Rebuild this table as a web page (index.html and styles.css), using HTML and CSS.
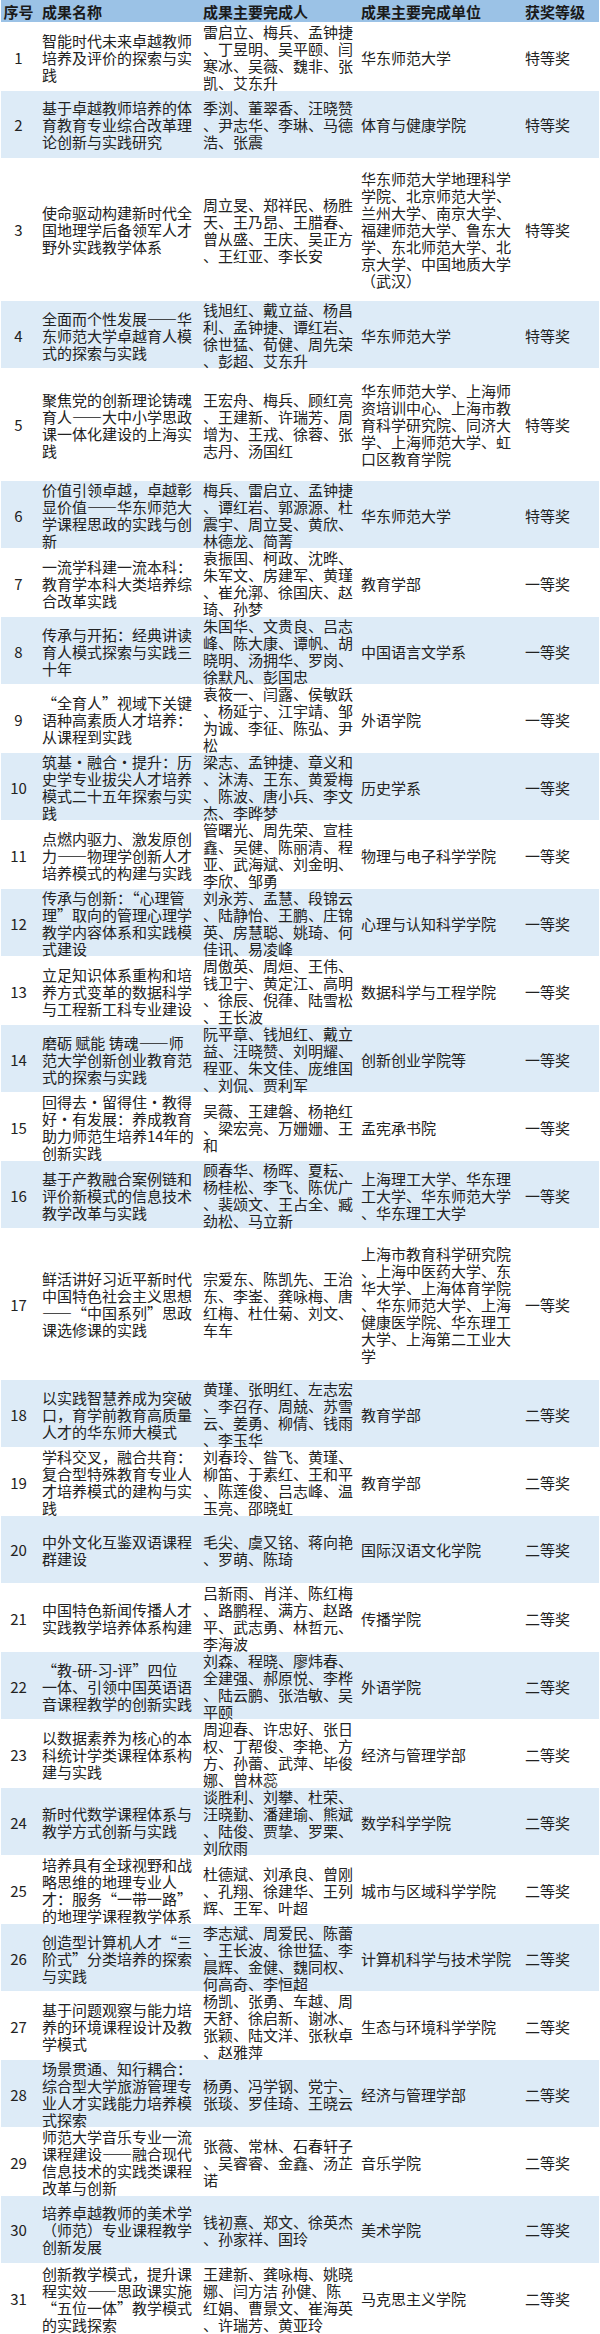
FILE: index.html
```html
<!DOCTYPE html>
<html lang="zh-CN">
<head>
<meta charset="utf-8">
<title>教学成果奖</title>
<link rel="stylesheet" href="styles.css">
</head>
<body>
<div class="table">
  <div class="row head">
    <div class="c seq">序号</div>
    <div class="c title">成果名称</div>
    <div class="c names">成果主要完成人</div>
    <div class="c unit">成果主要完成单位</div>
    <div class="c award">获奖等级</div>
  </div>

  <div class="row">
    <div class="c seq">1</div>
    <div class="c title">智能时代未来卓越教师<br>培养及评价的探索与实<br>践</div>
    <div class="c names">雷启立、梅兵、孟钟捷<br>、丁昱明、吴平颐、闫<br>寒冰、吴薇、魏非、张<br>凯、艾东升</div>
    <div class="c unit">华东师范大学</div>
    <div class="c award">特等奖</div>
  </div>

  <div class="row alt">
    <div class="c seq">2</div>
    <div class="c title">基于卓越教师培养的体<br>育教育专业综合改革理<br>论创新与实践研究</div>
    <div class="c names">季浏、董翠香、汪晓赞<br>、尹志华、李琳、马德<br>浩、张震</div>
    <div class="c unit">体育与健康学院</div>
    <div class="c award">特等奖</div>
  </div>

  <div class="row h142">
    <div class="c seq">3</div>
    <div class="c title">使命驱动构建新时代全<br>国地理学后备领军人才<br>野外实践教学体系</div>
    <div class="c names">周立旻、郑祥民、杨胜<br>天、王乃昂、王腊春、<br>曾从盛、王庆、吴正方<br>、王红亚、李长安</div>
    <div class="c unit">华东师范大学地理科学<br>学院、北京师范大学、<br>兰州大学、南京大学、<br>福建师范大学、鲁东大<br>学、东北师范大学、北<br>京大学、中国地质大学<br>（武汉）</div>
    <div class="c award">特等奖</div>
  </div>

  <div class="row alt">
    <div class="c seq">4</div>
    <div class="c title">全面而个性发展——华<br>东师范大学卓越育人模<br>式的探索与实践</div>
    <div class="c names">钱旭红、戴立益、杨昌<br>利、孟钟捷、谭红岩、<br>徐世猛、荀健、周先荣<br>、彭超、艾东升</div>
    <div class="c unit">华东师范大学</div>
    <div class="c award">特等奖</div>
  </div>

  <div class="row h112">
    <div class="c seq">5</div>
    <div class="c title">聚焦党的创新理论铸魂<br>育人——大中小学思政<br>课一体化建设的上海实<br>践</div>
    <div class="c names">王宏舟、梅兵、顾红亮<br>、王建新、许瑞芳、周<br>增为、王戎、徐蓉、张<br>志丹、汤国红</div>
    <div class="c unit">华东师范大学、上海师<br>资培训中心、上海市教<br>育科学研究院、同济大<br>学、上海师范大学、虹<br>口区教育学院</div>
    <div class="c award">特等奖</div>
  </div>

  <div class="row alt">
    <div class="c seq">6</div>
    <div class="c title">价值引领卓越，卓越彰<br>显价值——华东师范大<br>学课程思政的实践与创<br>新</div>
    <div class="c names">梅兵、雷启立、孟钟捷<br>、谭红岩、郭源源、杜<br>震宇、周立旻、黄欣、<br>林德龙、简菁</div>
    <div class="c unit">华东师范大学</div>
    <div class="c award">特等奖</div>
  </div>

  <div class="row">
    <div class="c seq">7</div>
    <div class="c title">一流学科建一流本科：<br>教育学本科大类培养综<br>合改革实践</div>
    <div class="c names">袁振国、柯政、沈晔、<br>朱军文、房建军、黄瑾<br>、崔允漷、徐国庆、赵<br>琦、孙梦</div>
    <div class="c unit">教育学部</div>
    <div class="c award">一等奖</div>
  </div>

  <div class="row alt">
    <div class="c seq">8</div>
    <div class="c title">传承与开拓：经典讲读<br>育人模式探索与实践三<br>十年</div>
    <div class="c names">朱国华、文贵良、吕志<br>峰、陈大康、谭帆、胡<br>晓明、汤拥华、罗岗、<br>徐默凡、彭国忠</div>
    <div class="c unit">中国语言文学系</div>
    <div class="c award">一等奖</div>
  </div>

  <div class="row">
    <div class="c seq">9</div>
    <div class="c title">“全育人”视域下关键<br>语种高素质人才培养：<br>从课程到实践</div>
    <div class="c names">袁筱一、闫露、侯敏跃<br>、杨延宁、江宇靖、邹<br>为诚、李征、陈弘、尹<br>松</div>
    <div class="c unit">外语学院</div>
    <div class="c award">一等奖</div>
  </div>

  <div class="row alt">
    <div class="c seq">10</div>
    <div class="c title">筑基·融合·提升：历<br>史学专业拔尖人才培养<br>模式二十五年探索与实<br>践</div>
    <div class="c names">梁志、孟钟捷、章义和<br>、沐涛、王东、黄爱梅<br>、陈波、唐小兵、李文<br>杰、李晔梦</div>
    <div class="c unit">历史学系</div>
    <div class="c award">一等奖</div>
  </div>

  <div class="row">
    <div class="c seq">11</div>
    <div class="c title">点燃内驱力、激发原创<br>力——物理学创新人才<br>培养模式的构建与实践</div>
    <div class="c names">管曙光、周先荣、宣桂<br>鑫、吴健、陈丽清、程<br>亚、武海斌、刘金明、<br>李欣、邹勇</div>
    <div class="c unit">物理与电子科学学院</div>
    <div class="c award">一等奖</div>
  </div>

  <div class="row alt">
    <div class="c seq">12</div>
    <div class="c title">传承与创新：“心理管<br>理”取向的管理心理学<br>教学内容体系和实践模<br>式建设</div>
    <div class="c names">刘永芳、孟慧、段锦云<br>、陆静怡、王鹏、庄锦<br>英、房慧聪、姚琦、何<br>佳讯、易凌峰</div>
    <div class="c unit">心理与认知科学学院</div>
    <div class="c award">一等奖</div>
  </div>

  <div class="row">
    <div class="c seq">13</div>
    <div class="c title">立足知识体系重构和培<br>养方式变革的数据科学<br>与工程新工科专业建设</div>
    <div class="c names">周傲英、周烜、王伟、<br>钱卫宁、黄定江、高明<br>、徐辰、倪葎、陆雪松<br>、王长波</div>
    <div class="c unit">数据科学与工程学院</div>
    <div class="c award">一等奖</div>
  </div>

  <div class="row alt">
    <div class="c seq">14</div>
    <div class="c title">磨砺 赋能 铸魂——师<br>范大学创新创业教育范<br>式的探索与实践</div>
    <div class="c names">阮平章、钱旭红、戴立<br>益、汪晓赞、刘明耀、<br>程亚、朱文佳、庞维国<br>、刘侃、贾利军</div>
    <div class="c unit">创新创业学院等</div>
    <div class="c award">一等奖</div>
  </div>

  <div class="row">
    <div class="c seq">15</div>
    <div class="c title">回得去·留得住·教得<br>好·有发展：养成教育<br>助力师范生培养14年的<br>创新实践</div>
    <div class="c names">吴薇、王建磐、杨艳红<br>、梁宏亮、万姗姗、王<br>和</div>
    <div class="c unit">孟宪承书院</div>
    <div class="c award">一等奖</div>
  </div>

  <div class="row alt">
    <div class="c seq">16</div>
    <div class="c title">基于产教融合案例链和<br>评价新模式的信息技术<br>教学改革与实践</div>
    <div class="c names">顾春华、杨晖、夏耘、<br>杨桂松、李飞、陈优广<br>、裴颂文、王占全、臧<br>劲松、马立新</div>
    <div class="c unit">上海理工大学、华东理<br>工大学、华东师范大学<br>、华东理工大学</div>
    <div class="c award">一等奖</div>
  </div>

  <div class="row h151">
    <div class="c seq">17</div>
    <div class="c title">鲜活讲好习近平新时代<br>中国特色社会主义思想<br>——“中国系列”思政<br>课选修课的实践</div>
    <div class="c names">宗爱东、陈凯先、王治<br>东、李崟、龚咏梅、唐<br>红梅、杜仕菊、刘文、<br>车车</div>
    <div class="c unit">上海市教育科学研究院<br>、上海中医药大学、东<br>华大学、上海体育学院<br>、华东师范大学、上海<br>健康医学院、华东理工<br>大学、上海第二工业大<br>学</div>
    <div class="c award">一等奖</div>
  </div>

  <div class="row alt">
    <div class="c seq">18</div>
    <div class="c title">以实践智慧养成为突破<br>口，育学前教育高质量<br>人才的华东师大模式</div>
    <div class="c names">黄瑾、张明红、左志宏<br>、李召存、周兢、苏雪<br>云、姜勇、柳倩、钱雨<br>、李玉华</div>
    <div class="c unit">教育学部</div>
    <div class="c award">二等奖</div>
  </div>

  <div class="row">
    <div class="c seq">19</div>
    <div class="c title">学科交叉，融合共育：<br>复合型特殊教育专业人<br>才培养模式的建构与实<br>践</div>
    <div class="c names">刘春玲、昝飞、黄瑾、<br>柳笛、于素红、王和平<br>、陈莲俊、吕志峰、温<br>玉亮、邵晓虹</div>
    <div class="c unit">教育学部</div>
    <div class="c award">二等奖</div>
  </div>

  <div class="row alt">
    <div class="c seq">20</div>
    <div class="c title">中外文化互鉴双语课程<br>群建设</div>
    <div class="c names">毛尖、虞又铭、蒋向艳<br>、罗萌、陈琦</div>
    <div class="c unit">国际汉语文化学院</div>
    <div class="c award">二等奖</div>
  </div>

  <div class="row">
    <div class="c seq">21</div>
    <div class="c title">中国特色新闻传播人才<br>实践教学培养体系构建</div>
    <div class="c names">吕新雨、肖洋、陈红梅<br>、路鹏程、满方、赵路<br>平、武志勇、林哲元、<br>李海波</div>
    <div class="c unit">传播学院</div>
    <div class="c award">二等奖</div>
  </div>

  <div class="row alt">
    <div class="c seq">22</div>
    <div class="c title">“教-研-习-评”四位<br>一体、引领中国英语语<br>音课程教学的创新实践</div>
    <div class="c names">刘森、程晓、廖炜春、<br>全建强、郝原悦、李桦<br>、陆云鹏、张浩敏、吴<br>平颐</div>
    <div class="c unit">外语学院</div>
    <div class="c award">二等奖</div>
  </div>

  <div class="row">
    <div class="c seq">23</div>
    <div class="c title">以数据素养为核心的本<br>科统计学类课程体系构<br>建与实践</div>
    <div class="c names">周迎春、许忠好、张日<br>权、丁帮俊、李艳、方<br>方、孙蕾、武萍、毕俊<br>娜、曾林蕊</div>
    <div class="c unit">经济与管理学部</div>
    <div class="c award">二等奖</div>
  </div>

  <div class="row alt">
    <div class="c seq">24</div>
    <div class="c title">新时代数学课程体系与<br>教学方式创新与实践</div>
    <div class="c names">谈胜利、刘攀、杜荣、<br>汪晓勤、潘建瑜、熊斌<br>、陆俊、贾挚、罗栗、<br>刘欣雨</div>
    <div class="c unit">数学科学学院</div>
    <div class="c award">二等奖</div>
  </div>

  <div class="row">
    <div class="c seq">25</div>
    <div class="c title">培养具有全球视野和战<br>略思维的地理专业人<br>才：服务“一带一路”<br>的地理学课程教学体系</div>
    <div class="c names">杜德斌、刘承良、曾刚<br>、孔翔、徐建华、王列<br>辉、王军、叶超</div>
    <div class="c unit">城市与区域科学学院</div>
    <div class="c award">二等奖</div>
  </div>

  <div class="row alt">
    <div class="c seq">26</div>
    <div class="c title">创造型计算机人才“三<br>阶式”分类培养的探索<br>与实践</div>
    <div class="c names">李志斌、周爱民、陈蕾<br>、王长波、徐世猛、李<br>晨辉、金健、魏同权、<br>何高奇、李恒超</div>
    <div class="c unit">计算机科学与技术学院</div>
    <div class="c award">二等奖</div>
  </div>

  <div class="row">
    <div class="c seq">27</div>
    <div class="c title">基于问题观察与能力培<br>养的环境课程设计及教<br>学模式</div>
    <div class="c names">杨凯、张勇、车越、周<br>天舒、徐启新、谢冰、<br>张颖、陆文洋、张秋卓<br>、赵雅萍</div>
    <div class="c unit">生态与环境科学学院</div>
    <div class="c award">二等奖</div>
  </div>

  <div class="row alt">
    <div class="c seq">28</div>
    <div class="c title">场景贯通、知行耦合：<br>综合型大学旅游管理专<br>业人才实践能力培养模<br>式探索</div>
    <div class="c names">杨勇、冯学钢、党宁、<br>张琰、罗佳琦、王晓云</div>
    <div class="c unit">经济与管理学部</div>
    <div class="c award">二等奖</div>
  </div>

  <div class="row">
    <div class="c seq">29</div>
    <div class="c title">师范大学音乐专业一流<br>课程建设——融合现代<br>信息技术的实践类课程<br>改革与创新</div>
    <div class="c names">张薇、常林、石春轩子<br>、吴睿睿、金鑫、汤芷<br>诺</div>
    <div class="c unit">音乐学院</div>
    <div class="c award">二等奖</div>
  </div>

  <div class="row alt">
    <div class="c seq">30</div>
    <div class="c title">培养卓越教师的美术学<br>（师范）专业课程教学<br>创新发展</div>
    <div class="c names">钱初熹、郑文、徐英杰<br>、孙家祥、国玲</div>
    <div class="c unit">美术学院</div>
    <div class="c award">二等奖</div>
  </div>

  <div class="row last">
    <div class="c seq">31</div>
    <div class="c title">创新教学模式，提升课<br>程实效——思政课实施<br>“五位一体”教学模式<br>的实践探索</div>
    <div class="c names">王建新、龚咏梅、姚晓<br>娜、闫方洁 孙健、陈<br>红娟、曹景文、崔海英<br>、许瑞芳、黄亚玲</div>
    <div class="c unit">马克思主义学院</div>
    <div class="c award">二等奖</div>
  </div>
</div>
</body>
</html>
```

FILE: styles.css
```css
html, body {
  margin: 0;
  padding: 0;
  background: #ffffff;
}

body {
  font-family: "Noto Sans CJK SC", "Noto Sans", sans-serif;
  font-size: 15px;
  line-height: 17px;
  color: #222222;
}

.table {
  width: 600px;
  padding: 0 1px;
  box-sizing: border-box;
}

.row {
  display: grid;
  grid-template-columns: 35px 166px 158px 164px 1fr;
  align-items: center;
  height: 68px;
  box-sizing: border-box;
  border-top: 1px solid #ffffff;
  overflow: visible;
}

.row.alt {
  background: #ddebf7;
}

.row.head {
  height: 22px;
  background: #9bc2e6;
  font-weight: bold;
  color: #1a1a1a;
  border-top: 0;
}

.row.h142 { height: 142px; }
.row.h112 { height: 112px; }
.row.h151 { height: 151px; }
.row.last { height: 70px; }

.c {
  white-space: nowrap;
}

.seq {
  text-align: center;
}

.title {
  padding-left: 6px;
}

.names {
  padding-left: 1px;
}

.unit {
  padding-left: 1px;
}

.award {
  padding-left: 1px;
}
```
